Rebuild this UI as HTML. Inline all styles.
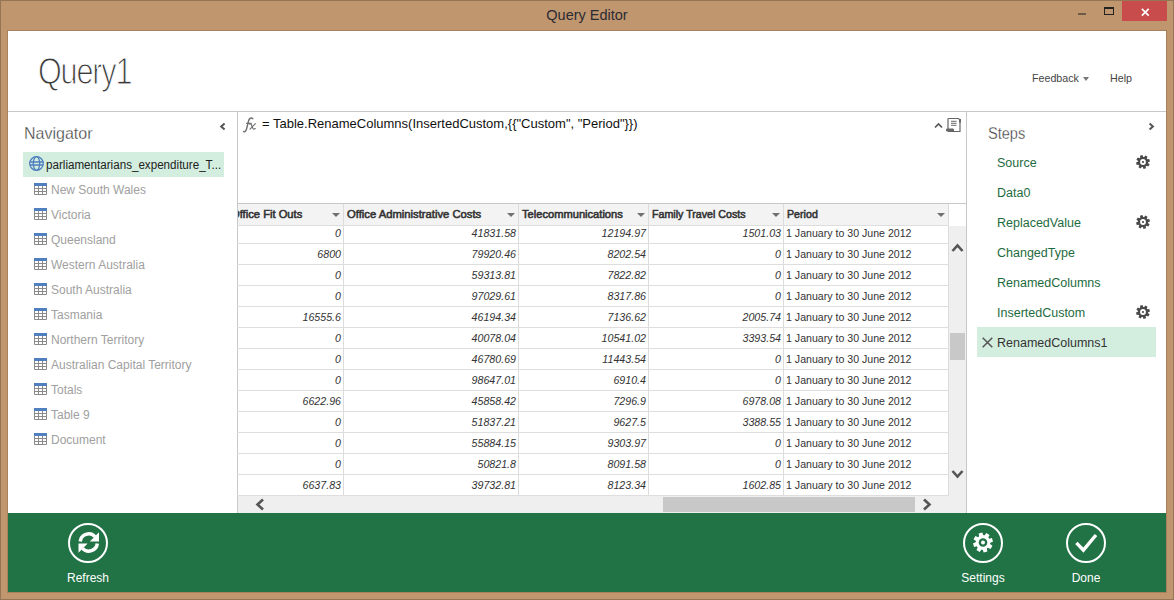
<!DOCTYPE html>
<html><head><meta charset="utf-8"><style>
*{margin:0;padding:0;box-sizing:border-box}
html,body{width:1174px;height:600px;overflow:hidden;background:#c0966f;font-family:"Liberation Sans",sans-serif}
.abs{position:absolute}
.hline{position:absolute;height:1px;background:#dedede}
.vline{position:absolute;width:1px;background:#c8c8c8}
.nav{position:absolute;left:51px;font-size:12px;color:#a0a0a0;transform-origin:0 0;line-height:16px;white-space:nowrap}
.navi{position:absolute;left:34px}
.step{position:absolute;left:997px;font-size:12.5px;color:#1d6b3e;line-height:16px;white-space:nowrap}
.gear{position:absolute;left:1136px}
.hdr{position:absolute;top:204px;height:21px;background:#f3f3f3;overflow:hidden}
.hdr span{position:absolute;top:3.2px;font-size:10.67px;color:#333;line-height:14px;white-space:nowrap;-webkit-text-stroke:0.55px #333;transform-origin:0 0}
.tri{position:absolute;top:213px;width:0;height:0;border-left:4px solid transparent;border-right:4px solid transparent;border-top:4.5px solid #707070}
.cell{position:absolute;font-size:10.67px;color:#333;font-style:italic;text-align:right;line-height:14px;white-space:nowrap}
.per{position:absolute;left:786px;font-size:10.6px;color:#333;line-height:14px;white-space:nowrap}
.btxt{position:absolute;font-size:12px;color:#fff;line-height:14px;text-align:center;width:80px}
</style></head><body>
<div class="abs" style="left:0;top:0;width:1174px;height:600px;border:1px solid #957556"></div>
<div class="abs" style="left:0;top:6px;width:1174px;text-align:center;font-size:14.5px;color:#2b2b33;line-height:18px">Query Editor</div>
<div class="abs" style="left:1078px;top:13px;width:8px;height:2px;background:#6f5a45"></div>
<div class="abs" style="left:1104px;top:7px;width:10px;height:8px;border:1px solid #222;border-top-width:2px"></div>
<div class="abs" style="left:1122px;top:1px;width:45px;height:20px;background:#c84c4c"></div>
<svg class="abs" style="left:1141px;top:7.5px" width="9" height="9" viewBox="0 0 9 9"><path d="M0.9 0.9L7.7 7.7M7.7 0.9L0.9 7.7" stroke="#fff" stroke-width="1.7"/></svg>
<div class="abs" style="left:7px;top:30px;width:1160px;height:563px;background:#a8805c"></div>
<div class="abs" style="left:8px;top:31px;width:1158px;height:482px;background:#fff"></div>
<div class="abs" style="left:8px;top:513px;width:1158px;height:79px;background:#217346"></div>
<div class="abs" style="left:38px;top:51.6px;font-size:36px;letter-spacing:-1.4px;color:#3a3a3a;line-height:40px;white-space:nowrap;transform:scaleX(0.85);transform-origin:0 0;-webkit-text-stroke:1.1px #fff">Query1</div>
<div class="abs" style="left:1032px;top:71px;font-size:10.7px;color:#444;line-height:14px">Feedback</div>
<div class="abs" style="left:1083px;top:77px;width:0;height:0;border-left:3.5px solid transparent;border-right:3.5px solid transparent;border-top:4px solid #777"></div>
<div class="abs" style="left:1110px;top:71px;font-size:10.7px;color:#444;line-height:14px">Help</div>
<div class="vline" style="left:8px;top:111px;width:1158px;height:1px"></div>
<div class="vline" style="left:237px;top:111px;height:402px"></div>
<div class="vline" style="left:966px;top:111px;height:402px"></div>
<div class="abs" style="left:24px;top:124.8px;font-size:16px;color:#3c3c3c;line-height:18px;-webkit-text-stroke:0.3px #fff">Navigator</div>
<svg class="abs" style="left:219px;top:122px" width="8" height="9" viewBox="0 0 8 9"><path d="M5.6 1.6L2.2 4.6L5.6 7.6" stroke="#555" stroke-width="2" fill="none"/></svg>
<div class="abs" style="left:23px;top:152px;width:201px;height:25px;background:#d3eddf"></div>
<svg class="abs" style="left:29px;top:156px" width="16" height="16" viewBox="0 0 16 16"><g fill="none" stroke="#4f7fbf" stroke-width="1.3"><circle cx="7.5" cy="7.5" r="6.8"/><ellipse cx="7.5" cy="7.5" rx="3.2" ry="6.8"/><path d="M1 6H14M1 9H14"/></g></svg>
<div class="abs" style="left:46px;top:157px;font-size:12.5px;color:#222;line-height:16px;white-space:nowrap;transform:scaleX(0.93);transform-origin:0 0">parliamentarians_expenditure_T...</div>
<svg class="navi" style="top:183px" width="13" height="12" viewBox="0 0 13 12"><rect x="0" y="0" width="13" height="3" fill="#4f7fbf"/><g fill="none" stroke="#8a8a8a" stroke-width="1"><path d="M0.5 3V11.5H12.5V3M0.5 5.5H12.5M0.5 8.5H12.5M4.5 3V11.5M8.5 3V11.5"/></g></svg>
<div class="nav" style="top:182px">New South Wales</div>
<svg class="navi" style="top:208px" width="13" height="12" viewBox="0 0 13 12"><rect x="0" y="0" width="13" height="3" fill="#4f7fbf"/><g fill="none" stroke="#8a8a8a" stroke-width="1"><path d="M0.5 3V11.5H12.5V3M0.5 5.5H12.5M0.5 8.5H12.5M4.5 3V11.5M8.5 3V11.5"/></g></svg>
<div class="nav" style="top:207px">Victoria</div>
<svg class="navi" style="top:233px" width="13" height="12" viewBox="0 0 13 12"><rect x="0" y="0" width="13" height="3" fill="#4f7fbf"/><g fill="none" stroke="#8a8a8a" stroke-width="1"><path d="M0.5 3V11.5H12.5V3M0.5 5.5H12.5M0.5 8.5H12.5M4.5 3V11.5M8.5 3V11.5"/></g></svg>
<div class="nav" style="top:232px">Queensland</div>
<svg class="navi" style="top:258px" width="13" height="12" viewBox="0 0 13 12"><rect x="0" y="0" width="13" height="3" fill="#4f7fbf"/><g fill="none" stroke="#8a8a8a" stroke-width="1"><path d="M0.5 3V11.5H12.5V3M0.5 5.5H12.5M0.5 8.5H12.5M4.5 3V11.5M8.5 3V11.5"/></g></svg>
<div class="nav" style="top:257px">Western Australia</div>
<svg class="navi" style="top:283px" width="13" height="12" viewBox="0 0 13 12"><rect x="0" y="0" width="13" height="3" fill="#4f7fbf"/><g fill="none" stroke="#8a8a8a" stroke-width="1"><path d="M0.5 3V11.5H12.5V3M0.5 5.5H12.5M0.5 8.5H12.5M4.5 3V11.5M8.5 3V11.5"/></g></svg>
<div class="nav" style="top:282px">South Australia</div>
<svg class="navi" style="top:308px" width="13" height="12" viewBox="0 0 13 12"><rect x="0" y="0" width="13" height="3" fill="#4f7fbf"/><g fill="none" stroke="#8a8a8a" stroke-width="1"><path d="M0.5 3V11.5H12.5V3M0.5 5.5H12.5M0.5 8.5H12.5M4.5 3V11.5M8.5 3V11.5"/></g></svg>
<div class="nav" style="top:307px">Tasmania</div>
<svg class="navi" style="top:333px" width="13" height="12" viewBox="0 0 13 12"><rect x="0" y="0" width="13" height="3" fill="#4f7fbf"/><g fill="none" stroke="#8a8a8a" stroke-width="1"><path d="M0.5 3V11.5H12.5V3M0.5 5.5H12.5M0.5 8.5H12.5M4.5 3V11.5M8.5 3V11.5"/></g></svg>
<div class="nav" style="top:332px">Northern Territory</div>
<svg class="navi" style="top:358px" width="13" height="12" viewBox="0 0 13 12"><rect x="0" y="0" width="13" height="3" fill="#4f7fbf"/><g fill="none" stroke="#8a8a8a" stroke-width="1"><path d="M0.5 3V11.5H12.5V3M0.5 5.5H12.5M0.5 8.5H12.5M4.5 3V11.5M8.5 3V11.5"/></g></svg>
<div class="nav" style="top:357px">Australian Capital Territory</div>
<svg class="navi" style="top:383px" width="13" height="12" viewBox="0 0 13 12"><rect x="0" y="0" width="13" height="3" fill="#4f7fbf"/><g fill="none" stroke="#8a8a8a" stroke-width="1"><path d="M0.5 3V11.5H12.5V3M0.5 5.5H12.5M0.5 8.5H12.5M4.5 3V11.5M8.5 3V11.5"/></g></svg>
<div class="nav" style="top:382px">Totals</div>
<svg class="navi" style="top:408px" width="13" height="12" viewBox="0 0 13 12"><rect x="0" y="0" width="13" height="3" fill="#4f7fbf"/><g fill="none" stroke="#8a8a8a" stroke-width="1"><path d="M0.5 3V11.5H12.5V3M0.5 5.5H12.5M0.5 8.5H12.5M4.5 3V11.5M8.5 3V11.5"/></g></svg>
<div class="nav" style="top:407px">Table 9</div>
<svg class="navi" style="top:433px" width="13" height="12" viewBox="0 0 13 12"><rect x="0" y="0" width="13" height="3" fill="#4f7fbf"/><g fill="none" stroke="#8a8a8a" stroke-width="1"><path d="M0.5 3V11.5H12.5V3M0.5 5.5H12.5M0.5 8.5H12.5M4.5 3V11.5M8.5 3V11.5"/></g></svg>
<div class="nav" style="top:432px">Document</div>
<svg class="abs" style="left:240px;top:114px" width="20" height="20" viewBox="0 0 20 20"><g fill="none" stroke="#707070" stroke-linecap="round"><path d="M3.6 17.4Q4.6 18.3 5.8 16.8Q6.6 15.5 7.4 11.5L8.6 6.8Q9.5 3.8 11.6 4.0Q12.6 4.2 12.8 4.8" stroke-width="1.4"/><path d="M6.6 9.4H11.2" stroke-width="1.1"/><path d="M9.6 10.0Q10.9 9.2 11.6 11.2L12.8 14.2Q13.6 15.8 15.2 14.6" stroke-width="1.2"/><path d="M15.4 9.6Q13.0 12.0 10.0 15.2" stroke-width="1.1"/></g></svg>
<div class="abs" style="left:262px;top:116px;font-size:13px;color:#111;line-height:16px;white-space:nowrap">= Table.RenameColumns(InsertedCustom,{{&quot;Custom&quot;, &quot;Period&quot;}})</div>
<div class="hline" style="left:237px;top:203px;width:729px;background:#c8c8c8"></div>
<div class="hdr" style="left:238px;width:105px"><span style="left:-7px;transform:scaleX(1.05)">Office Fit Outs</span></div>
<div class="tri" style="left:331.5px"></div>
<div class="hdr" style="left:344px;width:174px"><span style="left:3px;transform:scaleX(1.055)">Office Administrative Costs</span></div>
<div class="tri" style="left:506.5px"></div>
<div class="hdr" style="left:519px;width:129px"><span style="left:3px;transform:scaleX(1.044)">Telecommunications</span></div>
<div class="tri" style="left:636.5px"></div>
<div class="hdr" style="left:649px;width:134px"><span style="left:3px;transform:scaleX(1)">Family Travel Costs</span></div>
<div class="tri" style="left:771.5px"></div>
<div class="hdr" style="left:784px;width:164px"><span style="left:3px;transform:scaleX(1)">Period</span></div>
<div class="tri" style="left:936.5px"></div>
<div class="vline" style="left:343px;top:204px;height:291px;background:#dcdcdc"></div>
<div class="vline" style="left:518px;top:204px;height:291px;background:#dcdcdc"></div>
<div class="vline" style="left:648px;top:204px;height:291px;background:#dcdcdc"></div>
<div class="vline" style="left:783px;top:204px;height:291px;background:#dcdcdc"></div>
<div class="vline" style="left:948px;top:204px;height:291px;background:#dcdcdc"></div>
<div class="hline" style="left:237px;top:225px;width:712px"></div>
<div class="hline" style="left:237px;top:243px;width:712px"></div>
<div class="cell" style="left:238px;width:103px;top:226px">0</div>
<div class="cell" style="left:344px;width:172px;top:226px">41831.58</div>
<div class="cell" style="left:519px;width:127px;top:226px">12194.97</div>
<div class="cell" style="left:649px;width:132px;top:226px">1501.03</div>
<div class="per" style="top:226px">1 January to 30 June 2012</div>
<div class="hline" style="left:237px;top:264px;width:712px"></div>
<div class="cell" style="left:238px;width:103px;top:247px">6800</div>
<div class="cell" style="left:344px;width:172px;top:247px">79920.46</div>
<div class="cell" style="left:519px;width:127px;top:247px">8202.54</div>
<div class="cell" style="left:649px;width:132px;top:247px">0</div>
<div class="per" style="top:247px">1 January to 30 June 2012</div>
<div class="hline" style="left:237px;top:285px;width:712px"></div>
<div class="cell" style="left:238px;width:103px;top:268px">0</div>
<div class="cell" style="left:344px;width:172px;top:268px">59313.81</div>
<div class="cell" style="left:519px;width:127px;top:268px">7822.82</div>
<div class="cell" style="left:649px;width:132px;top:268px">0</div>
<div class="per" style="top:268px">1 January to 30 June 2012</div>
<div class="hline" style="left:237px;top:306px;width:712px"></div>
<div class="cell" style="left:238px;width:103px;top:289px">0</div>
<div class="cell" style="left:344px;width:172px;top:289px">97029.61</div>
<div class="cell" style="left:519px;width:127px;top:289px">8317.86</div>
<div class="cell" style="left:649px;width:132px;top:289px">0</div>
<div class="per" style="top:289px">1 January to 30 June 2012</div>
<div class="hline" style="left:237px;top:327px;width:712px"></div>
<div class="cell" style="left:238px;width:103px;top:310px">16555.6</div>
<div class="cell" style="left:344px;width:172px;top:310px">46194.34</div>
<div class="cell" style="left:519px;width:127px;top:310px">7136.62</div>
<div class="cell" style="left:649px;width:132px;top:310px">2005.74</div>
<div class="per" style="top:310px">1 January to 30 June 2012</div>
<div class="hline" style="left:237px;top:348px;width:712px"></div>
<div class="cell" style="left:238px;width:103px;top:331px">0</div>
<div class="cell" style="left:344px;width:172px;top:331px">40078.04</div>
<div class="cell" style="left:519px;width:127px;top:331px">10541.02</div>
<div class="cell" style="left:649px;width:132px;top:331px">3393.54</div>
<div class="per" style="top:331px">1 January to 30 June 2012</div>
<div class="hline" style="left:237px;top:369px;width:712px"></div>
<div class="cell" style="left:238px;width:103px;top:352px">0</div>
<div class="cell" style="left:344px;width:172px;top:352px">46780.69</div>
<div class="cell" style="left:519px;width:127px;top:352px">11443.54</div>
<div class="cell" style="left:649px;width:132px;top:352px">0</div>
<div class="per" style="top:352px">1 January to 30 June 2012</div>
<div class="hline" style="left:237px;top:390px;width:712px"></div>
<div class="cell" style="left:238px;width:103px;top:373px">0</div>
<div class="cell" style="left:344px;width:172px;top:373px">98647.01</div>
<div class="cell" style="left:519px;width:127px;top:373px">6910.4</div>
<div class="cell" style="left:649px;width:132px;top:373px">0</div>
<div class="per" style="top:373px">1 January to 30 June 2012</div>
<div class="hline" style="left:237px;top:411px;width:712px"></div>
<div class="cell" style="left:238px;width:103px;top:394px">6622.96</div>
<div class="cell" style="left:344px;width:172px;top:394px">45858.42</div>
<div class="cell" style="left:519px;width:127px;top:394px">7296.9</div>
<div class="cell" style="left:649px;width:132px;top:394px">6978.08</div>
<div class="per" style="top:394px">1 January to 30 June 2012</div>
<div class="hline" style="left:237px;top:432px;width:712px"></div>
<div class="cell" style="left:238px;width:103px;top:415px">0</div>
<div class="cell" style="left:344px;width:172px;top:415px">51837.21</div>
<div class="cell" style="left:519px;width:127px;top:415px">9627.5</div>
<div class="cell" style="left:649px;width:132px;top:415px">3388.55</div>
<div class="per" style="top:415px">1 January to 30 June 2012</div>
<div class="hline" style="left:237px;top:453px;width:712px"></div>
<div class="cell" style="left:238px;width:103px;top:436px">0</div>
<div class="cell" style="left:344px;width:172px;top:436px">55884.15</div>
<div class="cell" style="left:519px;width:127px;top:436px">9303.97</div>
<div class="cell" style="left:649px;width:132px;top:436px">0</div>
<div class="per" style="top:436px">1 January to 30 June 2012</div>
<div class="hline" style="left:237px;top:474px;width:712px"></div>
<div class="cell" style="left:238px;width:103px;top:457px">0</div>
<div class="cell" style="left:344px;width:172px;top:457px">50821.8</div>
<div class="cell" style="left:519px;width:127px;top:457px">8091.58</div>
<div class="cell" style="left:649px;width:132px;top:457px">0</div>
<div class="per" style="top:457px">1 January to 30 June 2012</div>
<div class="hline" style="left:237px;top:495px;width:712px"></div>
<div class="cell" style="left:238px;width:103px;top:478px">6637.83</div>
<div class="cell" style="left:344px;width:172px;top:478px">39732.81</div>
<div class="cell" style="left:519px;width:127px;top:478px">8123.34</div>
<div class="cell" style="left:649px;width:132px;top:478px">1602.85</div>
<div class="per" style="top:478px">1 January to 30 June 2012</div>
<div class="abs" style="left:949px;top:226px;width:17px;height:270px;background:#efefef"></div>
<svg class="abs" style="left:951px;top:242px" width="13" height="11" viewBox="0 0 13 11"><path d="M1.5 9L6.5 3.5L11.5 9" stroke="#555" stroke-width="2.6" fill="none"/></svg>
<div class="abs" style="left:950px;top:333px;width:15px;height:27px;background:#c8c8c8"></div>
<svg class="abs" style="left:951px;top:469px" width="13" height="11" viewBox="0 0 13 11"><path d="M1.5 2L6.5 7.5L11.5 2" stroke="#555" stroke-width="2.6" fill="none"/></svg>
<div class="abs" style="left:238px;top:496px;width:728px;height:17px;background:#efefef"></div>
<div class="abs" style="left:663px;top:497px;width:252px;height:15px;background:#c8c8c8"></div>
<svg class="abs" style="left:254px;top:498px" width="11" height="13" viewBox="0 0 11 13"><path d="M9 1.5L3.5 6.5L9 11.5" stroke="#555" stroke-width="2.6" fill="none"/></svg>
<svg class="abs" style="left:922px;top:498px" width="11" height="13" viewBox="0 0 11 13"><path d="M2 1.5L7.5 6.5L2 11.5" stroke="#555" stroke-width="2.6" fill="none"/></svg>
<svg class="abs" style="left:934px;top:122px" width="9" height="7" viewBox="0 0 9 7"><path d="M1 5.5L4.5 2L8 5.5" stroke="#555" stroke-width="1.6" fill="none"/></svg>
<svg class="abs" style="left:945px;top:117px" width="18" height="16" viewBox="0 0 18 16"><g fill="none" stroke="#666" stroke-width="1.2"><path d="M3 13V2.2Q3 1.5 3.7 1.5H13.5L15 3V14.5H3"/><path d="M6 4.3H11.5M6 6.3H11.5M6 8.3H11.5" stroke="#888"/></g><rect x="1" y="11.5" width="8" height="3" rx="1.2" fill="#666"/><rect x="14" y="2" width="2" height="3.5" fill="#666"/></svg>
<div class="abs" style="left:988px;top:124.8px;font-size:16px;color:#3c3c3c;line-height:18px;-webkit-text-stroke:0.3px #fff;transform:scaleX(0.91);transform-origin:0 0">Steps</div>
<svg class="abs" style="left:1147px;top:122px" width="8" height="9" viewBox="0 0 8 9"><path d="M2.6 1.6L5.9 4.6L2.6 7.6" stroke="#555" stroke-width="2" fill="none"/></svg>
<div class="abs" style="left:977px;top:327px;width:179px;height:30px;background:#d3eddf"></div>
<div class="step" style="top:155px;color:#1d6b3e">Source</div>
<svg class="gear" style="top:155px" width="14" height="14" viewBox="0 0 14 14"><path d="M11.24 4.35 L13.29 3.93 L13.98 6.51 L12.00 7.17 L11.87 8.12 L13.62 9.28 L12.28 11.59 L10.41 10.66 L9.65 11.24 L10.07 13.29 L7.49 13.98 L6.83 12.00 L5.88 11.87 L4.72 13.62 L2.41 12.28 L3.34 10.41 L2.76 9.65 L0.71 10.07 L0.02 7.49 L2.00 6.83 L2.13 5.88 L0.38 4.72 L1.72 2.41 L3.59 3.34 L4.35 2.76 L3.93 0.71 L6.51 0.02 L7.17 2.00 L8.12 2.13 L9.28 0.38 L11.59 1.72 L10.66 3.59Z" fill="#4a4a4a"/><circle cx="7" cy="7" r="5.1" fill="#4a4a4a"/><circle cx="7" cy="7" r="2.9" fill="#fff"/><circle cx="7" cy="7" r="1.1" fill="#4a4a4a"/></svg>
<div class="step" style="top:185px;color:#1d6b3e">Data0</div>
<div class="step" style="top:215px;color:#1d6b3e">ReplacedValue</div>
<svg class="gear" style="top:215px" width="14" height="14" viewBox="0 0 14 14"><path d="M11.24 4.35 L13.29 3.93 L13.98 6.51 L12.00 7.17 L11.87 8.12 L13.62 9.28 L12.28 11.59 L10.41 10.66 L9.65 11.24 L10.07 13.29 L7.49 13.98 L6.83 12.00 L5.88 11.87 L4.72 13.62 L2.41 12.28 L3.34 10.41 L2.76 9.65 L0.71 10.07 L0.02 7.49 L2.00 6.83 L2.13 5.88 L0.38 4.72 L1.72 2.41 L3.59 3.34 L4.35 2.76 L3.93 0.71 L6.51 0.02 L7.17 2.00 L8.12 2.13 L9.28 0.38 L11.59 1.72 L10.66 3.59Z" fill="#4a4a4a"/><circle cx="7" cy="7" r="5.1" fill="#4a4a4a"/><circle cx="7" cy="7" r="2.9" fill="#fff"/><circle cx="7" cy="7" r="1.1" fill="#4a4a4a"/></svg>
<div class="step" style="top:245px;color:#1d6b3e">ChangedType</div>
<div class="step" style="top:275px;color:#1d6b3e">RenamedColumns</div>
<div class="step" style="top:305px;color:#1d6b3e">InsertedCustom</div>
<svg class="gear" style="top:305px" width="14" height="14" viewBox="0 0 14 14"><path d="M11.24 4.35 L13.29 3.93 L13.98 6.51 L12.00 7.17 L11.87 8.12 L13.62 9.28 L12.28 11.59 L10.41 10.66 L9.65 11.24 L10.07 13.29 L7.49 13.98 L6.83 12.00 L5.88 11.87 L4.72 13.62 L2.41 12.28 L3.34 10.41 L2.76 9.65 L0.71 10.07 L0.02 7.49 L2.00 6.83 L2.13 5.88 L0.38 4.72 L1.72 2.41 L3.59 3.34 L4.35 2.76 L3.93 0.71 L6.51 0.02 L7.17 2.00 L8.12 2.13 L9.28 0.38 L11.59 1.72 L10.66 3.59Z" fill="#4a4a4a"/><circle cx="7" cy="7" r="5.1" fill="#4a4a4a"/><circle cx="7" cy="7" r="2.9" fill="#fff"/><circle cx="7" cy="7" r="1.1" fill="#4a4a4a"/></svg>
<div class="step" style="top:335px;color:#333">RenamedColumns1</div>
<svg class="abs" style="left:982px;top:337px" width="11" height="11" viewBox="0 0 11 11"><path d="M0.7 0.7L10.3 10.3M10.3 0.7L0.7 10.3" stroke="#555" stroke-width="1.5"/></svg>
<svg class="abs" style="left:68px;top:523px" width="40" height="40" viewBox="0 0 40 40"><circle cx="20" cy="20" r="19" fill="none" stroke="#fff" stroke-width="2"/><g transform="translate(20.75 19.5)"><g id="rh"><path d="M-8.55 -1A8.55 8.55 0 0 1 6.2 -5.9" fill="none" stroke="#fff" stroke-width="3.5"/><path d="M10.25 -10.2L10.25 -1L1.1 -1Z" fill="#fff"/></g><g transform="rotate(180)"><path d="M-8.55 -1A8.55 8.55 0 0 1 6.2 -5.9" fill="none" stroke="#fff" stroke-width="3.5"/><path d="M10.25 -10.2L10.25 -1L1.1 -1Z" fill="#fff"/></g></g></svg>
<svg class="abs" style="left:963px;top:523px" width="40" height="40" viewBox="0 0 40 40"><circle cx="20" cy="20" r="19" fill="none" stroke="#fff" stroke-width="2"/><path d="M26.11 15.68 L28.99 15.12 L29.98 18.80 L27.20 19.75 L27.02 21.12 L29.46 22.76 L27.55 26.06 L24.91 24.77 L23.82 25.61 L24.38 28.49 L20.70 29.48 L19.75 26.70 L18.38 26.52 L16.74 28.96 L13.44 27.05 L14.73 24.41 L13.89 23.32 L11.01 23.88 L10.02 20.20 L12.80 19.25 L12.98 17.88 L10.54 16.24 L12.45 12.94 L15.09 14.23 L16.18 13.39 L15.62 10.51 L19.30 9.52 L20.25 12.30 L21.62 12.48 L23.26 10.04 L26.56 11.95 L25.27 14.59Z" fill="#fff"/><circle cx="20" cy="19.5" r="7.2" fill="#fff"/><circle cx="20" cy="19.5" r="4.3" fill="#217346"/><circle cx="20" cy="19.5" r="2" fill="#fff"/></svg>
<svg class="abs" style="left:1066px;top:523px" width="40" height="40" viewBox="0 0 40 40"><circle cx="20" cy="20" r="19" fill="none" stroke="#fff" stroke-width="2"/><path d="M10.4 19.8L17.4 27.2L30 12" fill="none" stroke="#fff" stroke-width="3.4"/></svg>
<div class="btxt" style="left:48px;top:571px">Refresh</div>
<div class="btxt" style="left:943px;top:571px">Settings</div>
<div class="btxt" style="left:1046px;top:571px">Done</div>
</body></html>
